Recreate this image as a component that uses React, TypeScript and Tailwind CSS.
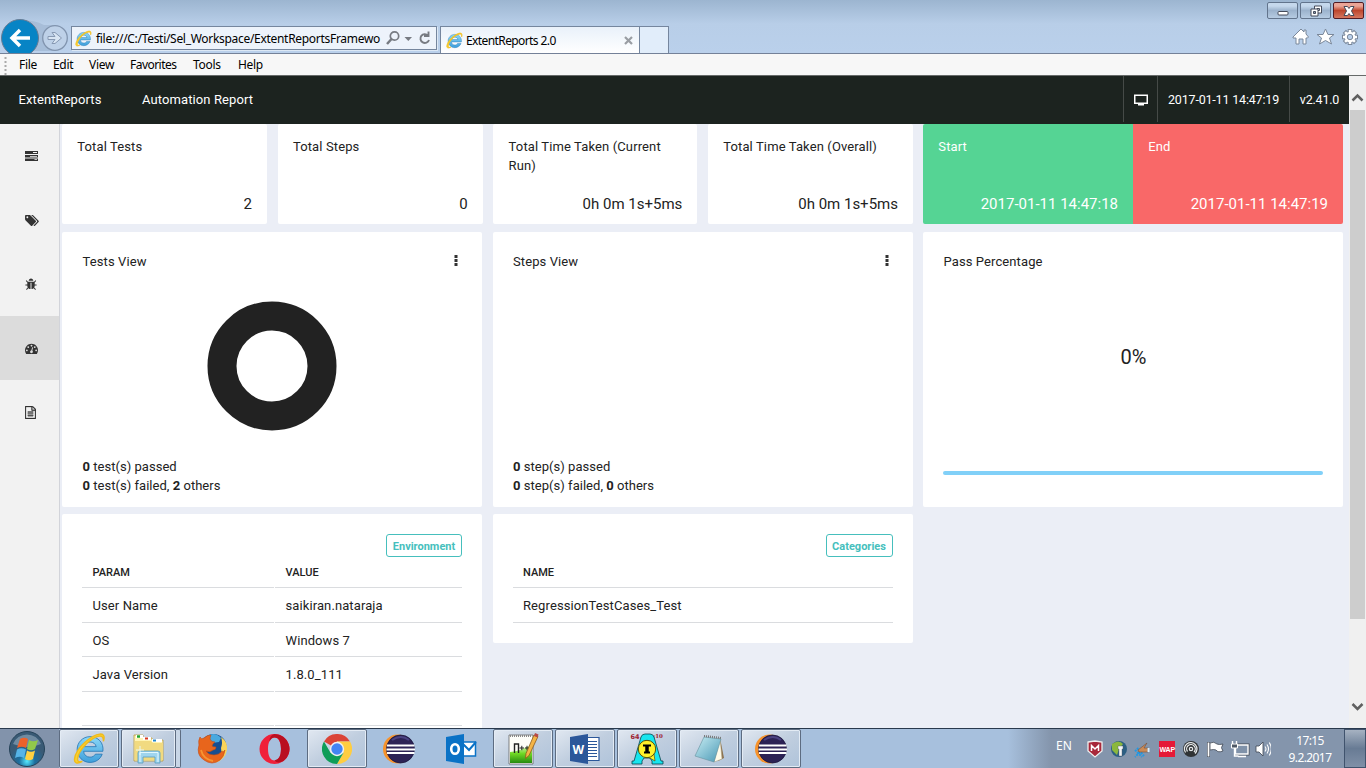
import React from 'react';

const tags = "M448 448q0-53-37.5-90.5t-90.5-37.5-90.5 37.5-37.5 90.5 37.5 90.5 90.5 37.5 90.5-37.5 37.5-90.5zM1515 1024q0 53-37 90l-491 492q-39 37-91 37-53 0-90-37l-715-716q-38-37-64.5-101t-26.5-117v-416q0-52 38-90t90-38h416q53 0 117 26.5t102 64.5l715 714q37 39 37 91zM1899 1024q0 53-37 90l-491 492q-39 37-91 37-36 0-59-14t-53-45l470-470q37-37 37-90 0-52-37-91l-715-714q-38-38-102-64.5t-117-26.5h224q53 0 117 26.5t102 64.5l715 714q37 39 37 91z";
const bug = "M1632 960q0 26-19 45t-45 19h-224q0 171-67 290l208 209q19 19 19 45t-19 45q-18 19-45 19t-45-19l-198-197q-5 5-15 13t-42 28.5-65 36.5-82 29-97 13v-896h-128v896q-51 0-101.5-13.5t-87-33-66-39-43.5-32.5l-15-14-183 207q-20 21-48 21-24 0-43-16-19-18-20.5-44.5t15.5-46.5l202-227q-58-114-58-274h-224q-26 0-45-19t-19-45 19-45 45-19h224v-294l-173-173q-19-19-19-45t19-45 45-19 45 19l173 173h844l173-173q19-19 45-19t45 19 19 45-19 45l-173 173v294h224q26 0 45 19t19 45zM1152 384h-640q0-133 93.5-226.5t226.5-93.5 226.5 93.5 93.5 226.5z";
const dash = "M384 1152q0-53-37.5-90.5t-90.5-37.5-90.5 37.5-37.5 90.5 37.5 90.5 90.5 37.5 90.5-37.5 37.5-90.5zM576 704q0-53-37.5-90.5t-90.5-37.5-90.5 37.5-37.5 90.5 37.5 90.5 90.5 37.5 90.5-37.5 37.5-90.5zM1004 1185l101-382q6-26-7.5-48.5t-38.5-29.5-48 6.5-30 39.5l-101 382q-60 5-107 43.5t-63 98.5q-20 77 20 146t117 89 146-20 89-117q16-60-6-117t-72-91zM1664 1152q0-53-37.5-90.5t-90.5-37.5-90.5 37.5-37.5 90.5 37.5 90.5 90.5 37.5 90.5-37.5 37.5-90.5zM1024 512q0-53-37.5-90.5t-90.5-37.5-90.5 37.5-37.5 90.5 37.5 90.5 90.5 37.5 90.5-37.5 37.5-90.5zM1472 704q0-53-37.5-90.5t-90.5-37.5-90.5 37.5-37.5 90.5 37.5 90.5 90.5 37.5 90.5-37.5 37.5-90.5zM1792 1152q0 261-141 483-19 29-54 29h-1402q-35 0-54-29-141-221-141-483 0-182 71-348t191-286 286-191 348-71 348 71 286 191 191 286 71 348z";
const file = "M1468 380q28 28 48 76t20 88v1152q0 40-28 68t-68 28h-1344q-40 0-68-28t-28-68v-1600q0-40 28-68t68-28h896q40 0 88 20t76 48zM1024 136v376h376q-10-29-22-41l-313-313q-12-12-41-22zM1408 1664v-1024h-416q-40 0-68-28t-28-68v-416h-768v1536h1280zM384 800q0-14 9-23t23-9h704q14 0 23 9t9 23v64q0 14-9 23t-23 9h-704q-14 0-23-9t-9-23v-64zM1120 1024q14 0 23 9t9 23v64q0 14-9 23t-23 9h-704q-14 0-23-9t-9-23v-64q0-14 9-23t23-9h704zM1120 1280q14 0 23 9t9 23v64q0 14-9 23t-23 9h-704q-14 0-23-9t-9-23v-64q0-14 9-23t23-9h704z";

function IeLogo({ size }: { size: number }) {
  return (
    <svg width={size} height={size} viewBox="0 0 32 32" className="shrink-0">
      <defs>
        <linearGradient id="ieBlue" x1="0" y1="0" x2="0" y2="1">
          <stop offset="0" stopColor="#8bd8f7" /><stop offset="1" stopColor="#3f9fdb" />
        </linearGradient>
      </defs>
      <path d="M16.5 4.500C9.500 4.500 4 10 4 17s5.500 12.500 12.500 12.500c5.500 0 10-3 11.800-8h-6.600c-1 1.800-2.800 2.900-5.200 2.900-3.500 0-6-2.300-6.200-5.700H29C30 10.500 24.500 4.500 16.500 4.500zM10.400 14.200c.7-2.700 3-4.500 6.100-4.500s5.400 1.800 6 4.500z" fill="url(#ieBlue)" stroke="#2476b5" strokeWidth=".8" />
      <path d="M29.500 9C31 4.500 30 1.500 26 2 18 3 3 15 1.500 26c-.6 4 2.500 5.500 7.500 2.500-3.500 1-5 0-4.500-3C5.500 17 18 5 25.500 4c3-.4 4 1.500 4 5z" fill="#fbd22f" stroke="#f0bb1c" strokeWidth="1.300" />
    </svg>
  );
}

function Eclipse() {
  return (
    <svg width="34" height="32" viewBox="0 0 34 32">
      <circle cx="15.500" cy="16" r="14.500" fill="#f7932c" />
      <circle cx="18.500" cy="16" r="14" fill="#2c2255" stroke="#17133a" strokeWidth=".7" />
      <path d="M5 12.500h27.500M4.500 16.500h28.500M5 20h27.500" stroke="#fff" strokeWidth="1.800" />
      <path d="M10 7q9-6 17 0" stroke="#4b4282" strokeWidth="2" fill="none" />
    </svg>
  );
}

function Chrome() {
  return (
    <svg width="30" height="30" viewBox="0 0 30 30">
      <path d="M15 15 2 7.500A15 15 0 0 1 28 7.500H15z" fill="#db4437" />
      <path d="M28 7.500A15 15 0 0 1 15 30l6.500-11.200L15 7.500z" fill="#ffcd40" />
      <path d="M15 30A15 15 0 0 1 2 7.500l6.500 11.300L15 22l6.500-3.200z" fill="#0f9d58" />
      <circle cx="15" cy="15" r="7.200" fill="#f1f1f1" /><circle cx="15" cy="15" r="5.700" fill="#4285f4" />
    </svg>
  );
}

function Firefox() {
  return (
    <svg width="31" height="31" viewBox="0 0 31 31">
      <circle cx="16.500" cy="14" r="13" fill="#174e91" />
      <path d="M10 3q8-5 14 2l-2 4-7 1-5-2z" fill="#49a9df" />
      <path d="M24 4q7 5 6 13-2 10-12 13 8-8 6-15 2-5 0-11z" fill="#f9d45a" />
      <path d="M3 4Q1 8 2 12-1 22 7 27q8 6 16 0 4-3 5-10-2 3-3 1-3 4-8 4-6 0-8-4 4 2 7-1 3 0 3-3-3 0-4-1 1-3 3-4-4 0-5-3 0-2 1-4-4 0-7 3Q4 7 3 4z" fill="#e8651c" stroke="#c54a12" strokeWidth=".6" />
      <path d="M4 17q2 9 12 11" stroke="#f69432" strokeWidth="1.800" fill="none" />
    </svg>
  );
}

function Opera() {
  return (
    <svg width="31" height="32" viewBox="0 0 31 32">
      <path fillRule="evenodd" d="M15.500 1a15 15 0 1 0 0 30 15 15 0 0 0 0-30zm0 3.500c4 0 6.500 4.500 6.500 11.500s-2.500 11.500-6.500 11.500S9 23 9 16s2.500-11.500 6.500-11.500z" fill="#f0203a" />
      <path d="M15.500 1a15 15 0 0 1 9 27q-6 3-9-.5 6.500-1 6.500-11.500Q22 4 15.500 4.500q-3 0-5 4Q10 3 15.500 1z" fill="#b90f20" />
    </svg>
  );
}

function Explorer() {
  return (
    <svg width="34" height="32" viewBox="0 0 34 32">
      <path d="M2 4V2h9v3h9v2h11v21H2z" fill="#fff4b4" stroke="#b99a3e" strokeWidth=".8" />
      <path d="M11 4h8v3h-8zM20 6h10v3H20zM4 2h7v3H4z" fill="#fff" />
      <path d="M5 3.500h3" stroke="#24a52c" strokeWidth="2.500" /><path d="M13 5.500h3" stroke="#d63920" strokeWidth="2" /><path d="M21 7.500h3" stroke="#2488cb" strokeWidth="2" />
      <path d="M3 8h16l2 2h10v17H3z" fill="#f1da80" />
      <path d="M6 30V20q0-2 2-2h18q2 0 2 2v10h-5v-6H11v6z" fill="#9fd5ee" stroke="#579dbe" strokeWidth=".8" />
      <path d="M8 19.500h18M8 20v9M26 20v9M8 13v9M4 17h8" stroke="#e9faff" strokeWidth=".9" />
    </svg>
  );
}

function Outlook() {
  return (
    <svg width="32" height="32" viewBox="0 0 32 32">
      <path d="M18 9h12.500v14H18z" fill="#fff" stroke="#0a72c6" strokeWidth="1.500" /><path d="m18 11 6 6 7-8" fill="none" stroke="#0a72c6" strokeWidth="2" />
      <path d="m1 4 18-3v30L1 28z" fill="#0a72c6" /><ellipse cx="10" cy="16" rx="3.800" ry="4.800" fill="none" stroke="#fff" strokeWidth="2.600" />
    </svg>
  );
}

function Notepadpp() {
  return (
    <svg width="33" height="34" viewBox="0 0 33 34">
      <defs><linearGradient id="npp" x1="0" x2="0" y1="0" y2="1"><stop stopColor="#eafbd9" /><stop offset=".5" stopColor="#70d925" /><stop offset="1" stopColor="#268a10" /></linearGradient></defs>
      <path d="M2 3h24v29H2z" fill="#fdfdf8" stroke="#666" strokeWidth=".8" /><path d="M3 20q11-1 22-8v19H3z" fill="url(#npp)" /><path d="M3 4h22" stroke="#888" strokeWidth="2" strokeDasharray="1 1" />
      <path d="M7.500 21V12h4v9" fill="none" stroke="#222" strokeWidth="1.400" /><path d="M12.500 16h4.500m-2.200-2.200v4.400M18 16h4m-2-2.200v4.400" stroke="#222" />
      <path d="m27 3 4 1.500-9 19-3.500 3 .5-5z" fill="#f4b446" stroke="#8c5a1c" strokeWidth=".8" /><path d="m28 1 3.500 1.500-1 3L27 4z" fill="#b84a47" />
    </svg>
  );
}

function Word() {
  return (
    <svg width="32" height="32" viewBox="0 0 32 32">
      <path d="M17 4.500h13v23H17z" fill="#fff" stroke="#2b579a" strokeWidth="1.200" /><path d="M19 8.500h9m-9 3h9m-9 3h9m-9 3h9m-9 3h9m-9 3h9" stroke="#2b579a" />
      <path d="m1 4 18-3v30L1 28z" fill="#2b579a" /><text x="3.500" y="20.500" fontFamily="Open Sans" fontSize="12" fontWeight="bold" fill="#fff">W</text>
    </svg>
  );
}

function AInfo() {
  return (
    <svg width="36" height="36" viewBox="0 0 36 36">
      <text x="1.500" y="7.500" fontFamily="DejaVu Sans" fontSize="6.500" fontWeight="bold" fill="#9c2230">64</text><text x="23" y="7" fontFamily="DejaVu Serif" fontSize="5.500" fontWeight="bold" fill="#9c2230">v10</text>
      <path d="M12 6q1-3 4-3h5q3 0 4 3l7 24h2v3H23v-3l-2-3h-6l-2 3v3H3v-3h2z" fill="#18e5ee" stroke="#09434b" strokeWidth=".8" />
      <path d="m19 26 7 4-1-7z" fill="#fff229" stroke="#554f0a" strokeWidth=".7" /><circle cx="18" cy="18" r="8.700" fill="#fff229" stroke="#554f0a" />
      <path d="M14 14.500h8m-7 7h6" stroke="#000" strokeWidth="2.200" /><path d="M18 14v7" stroke="#000" strokeWidth="3.500" />
    </svg>
  );
}

function Notepad() {
  return (
    <svg width="32" height="32" viewBox="0 0 32 32">
      <defs><linearGradient id="np" x2="1" y2="1"><stop stopColor="#c8edf3" /><stop offset="1" stopColor="#4998b5" /></linearGradient></defs>
      <path d="m27 5 4 20-6 3z" fill="#8c7350" /><path d="m27 5 2 21-8 3z" fill="#fffbe9" stroke="#a69a7d" strokeWidth=".5" /><path d="m11 4 17 2-7 23-19-6z" fill="url(#np)" stroke="#64929f" strokeWidth=".6" />
      <path d="m11 3 17 2" stroke="#777" strokeWidth="2.200" strokeDasharray="1 1" />
    </svg>
  );
}

const tasks = [
  { icon: <IeLogo size={33} />, open: true }, { icon: <Explorer />, open: true, stack: true }, { icon: <Firefox />, open: false }, { icon: <Opera />, open: false },
  { icon: <Chrome />, open: true }, { icon: <Eclipse />, open: false }, { icon: <Outlook />, open: false }, { icon: <Notepadpp />, open: true },
  { icon: <Word />, open: true }, { icon: <AInfo />, open: true }, { icon: <Notepad />, open: true }, { icon: <Eclipse />, open: true },
];

function Browser() {
  return (
    <header className="flex h-[54px] justify-between border-b border-[#748198] bg-linear-to-b from-[#9cb5d0] via-[#b8cee8] via-45% to-[#bad0eb] font-['Noto_Sans',sans-serif]">
      <div className="flex h-[53px] pt-[19px]">
        <svg width="70" height="34" viewBox="0 0 70 34" className="shrink-0">
          <path d="M20 1q15 0 24 5h12v26H20z" fill="#9fb7d2" opacity=".7" />
          <circle cx="20" cy="19" r="18.500" fill="#0784c5" stroke="#687c94" />
          <path d="M30 19H12m8-8-8 8 8 8" stroke="#fff" strokeWidth="3.500" fill="none" />
          <circle cx="55" cy="19" r="12.300" fill="#bed1e8" stroke="#8194ae" strokeWidth="1.300" />
          <path d="M48 17.500h7l-3-4h3l6.500 5.500-6.500 5.500h-3l3-4h-7z" fill="#d8e5f3" stroke="#8799b3" />
        </svg>
        <div className="ml-px mt-[7px] flex h-6 w-[366px] items-center border border-[#75869e] bg-[#edf3fb] pl-[3px] shadow-[1px_1px_#dce8f5]">
          <IeLogo size={17} />
          <span className="ml-1 w-[286px] shrink-0 pt-px text-[12px] leading-5 tracking-[-0.300px] whitespace-nowrap text-black">file:///C:/Testi/Sel_Workspace/ExtentReportsFramewo</span>
          <svg width="50" height="18" viewBox="0 0 50 18" className="ml-1 shrink-0" fill="none" stroke="#777b82">
            <circle cx="8.500" cy="7" r="4.200" strokeWidth="1.700" /><path d="m5.500 10-4.500 5" strokeWidth="2.500" /><path d="M18.500 8h7.500l-3.700 4z" fill="#777b82" stroke="none" /><path d="M42 6.500A4.400 4.400 0 1 0 43 11M42.500 2.500v4.500H38" strokeWidth="1.900" />
          </svg>
        </div>
        <div className="ml-[3px] mt-[7px] flex h-[27px] w-[200px] items-center border border-b-0 border-[#75869e] bg-linear-to-b from-[#e9f1fa] to-white pl-[5px]">
          <IeLogo size={17} /><span className="ml-[3px] pt-px text-[12px] leading-5 tracking-[-0.600px] text-black">ExtentReports 2.0</span>
          <svg width="9" height="9" viewBox="0 0 9 9" className="mr-[6px] ml-auto"><path d="m1 1 7 7m0-7L1 8" stroke="#999da3" strokeWidth="2.200" /></svg>
        </div>
        <div className="mt-[7px] h-[27px] w-[29px] border border-b-0 border-l-0 border-[#75869e] bg-[#e1edfa]" />
      </div>
      <div className="flex w-[101px] flex-col">
        <div className="flex gap-[2px] pt-[2px] pl-[2px]">
          {[0, 1, 2].map((i) => (
            <div key={i} className={i === 2 ? 'flex h-[17px] w-[31px] items-center justify-center rounded-[2px] border border-[#521c24] bg-linear-to-b from-[#eaa597] from-20% via-[#bd462d] via-50% to-[#d47760]' : 'flex h-[17px] w-[31px] items-center justify-center rounded-[2px] border border-[#62748c] bg-linear-to-b from-[#c5d8ec] from-20% via-[#9cb3cd] via-50% to-[#b6cbe2]'}>
              <svg width="14" height="12" viewBox="0 0 14 12" fill="#fff" stroke="#454b5a">
                {i === 0 && <rect x="2" y="6.500" width="10" height="3.500" rx="1" />}
                {i === 1 && <><path d="M5.500 1h7v7h-7zM8 3.500h2.500v2H8z" /><path d="M2 4h7v7H2z" /><path d="M4.500 6.500h2v2h-2z" fill="#8c9eb5" /></>}
                {i === 2 && <path d="M2 1.500h3.500L7 3.500l1.500-2H12L9.500 6l2.500 4.500H8.500L7 8.500l-1.500 2H2L4.500 6z" />}
              </svg>
            </div>
          ))}
        </div>
        <svg width="70" height="20" viewBox="0 0 70 20" className="mt-2 ml-[27px]" fill="#fff" stroke="#7b889a">
          <path d="m1 10 8-8 3 3V3h2v4l2.500 3-1 1H14v6h-3v-5H7v5H4v-6H1z" />
          <path d="m33.500 2 2.500 5.500h6L37.500 11l2 6-6-3.500-6 3.500 2-6L25 7.500h6z" />
          <g transform="translate(58 10)">{[0, 45, 90, 135, 180, 225, 270, 315].map((r) => <rect key={r} x="-1.800" y="-7.500" width="3.600" height="5" transform={`rotate(${r})`} />)}<circle r="5.300" stroke="none" /><circle r="2.700" fill="#bad0eb" /></g>
        </svg>
      </div>
    </header>
  );
}

function Stat({ title, value, tone }: { title: string; value: string; tone: string }) {
  return (
    <section className={`flex h-[100px] flex-col justify-between pr-[15px] pt-[13px] pb-[9px] pl-[15.300px] ${tone}`}>
      <h2 className="text-[13px] leading-[19px] tracking-[0.120px]">{title}</h2>
      <div className="text-right text-[15px] leading-[22px] tracking-normal">{value}</div>
    </section>
  );
}

const Dots = () => <svg width="4" height="12" viewBox="0 0 4 12" fill="#333" className="mb-px"><path d="M.5 0h3v3h-3zM.5 4h3v3h-3zM.5 8h3v3h-3z" /></svg>;

function ViewCard({ title, noun, others, chart }: { title: string; noun: string; others: string; chart: boolean }) {
  return (
    <section className="flex h-[275px] flex-col rounded-[2px] bg-white pt-5 pr-5 pl-[20.500px]">
      <div className="flex items-center justify-between pr-1"><h2 className="leading-[19px] tracking-[0.100px]">{title}</h2><Dots /></div>
      <div className="flex h-[186px] items-center justify-center pt-[4px]">
        {chart && <svg width="130" height="130" viewBox="0 0 130 130"><circle cx="65" cy="65" r="50" fill="none" stroke="#222" strokeWidth="29" /></svg>}
      </div>
      <p className="leading-[19px] tracking-[0.030px]"><b className="font-bold">0</b> {noun}(s) passed<br /><b>0</b> {noun}(s) failed, <b>{others}</b> others</p>
    </section>
  );
}

const params = [['User Name', 'saikiran.nataraja', 'h-[35px]'], ['OS', 'Windows 7', 'h-[34px]'], ['Java Version', '1.8.0_111', 'h-[35px]'], ['', '', 'h-[34px]']];

function Dashboard() {
  return (
    <main className="flex h-[604px] w-[1289px] flex-col gap-2 overflow-hidden bg-[#ebeef6] pl-[2px] text-[13px] tracking-[0.100px] text-[#222]">
      <div className="flex shrink-0">
        <div className="flex w-[851px] justify-between">
          <div className="w-[205px]"><Stat title="Total Tests" value="2" tone="rounded-[2px] bg-white" /></div>
          <div className="w-[205px]"><Stat title="Total Steps" value="0" tone="rounded-[2px] bg-white" /></div>
          <div className="w-[204px]"><Stat title="Total Time Taken (Current Run)" value="0h 0m 1s+5ms" tone="rounded-[2px] bg-white" /></div>
          <div className="w-[205px]"><Stat title="Total Time Taken (Overall)" value="0h 0m 1s+5ms" tone="rounded-[2px] bg-white" /></div>
        </div>
        <div className="ml-[10px] grid w-[420px] grid-cols-2">
          <Stat title="Start" value="2017-01-11 14:47:18" tone="rounded-l-[2px] bg-[#55d494] text-white" />
          <Stat title="End" value="2017-01-11 14:47:19" tone="rounded-r-[2px] bg-[#f96868] text-white" />
        </div>
      </div>
      <div className="grid shrink-0 grid-cols-[420px_420px_420px] gap-x-[10.500px]">
        <ViewCard title="Tests View" noun="test" others="2" chart />
        <ViewCard title="Steps View" noun="step" others="0" chart={false} />
        <section className="flex h-[275px] flex-col rounded-[2px] bg-white pt-5 pr-5 pl-5">
          <h2 className="pl-[0.500px] leading-[19px]">Pass Percentage</h2>
          <div className="mt-[71px] pl-px text-center text-[20px] leading-[30px] tracking-normal">0%</div>
          <div className="mt-[99px] h-1 rounded-full bg-[#81d0f8]" />
        </section>
      </div>
      <div className="-mt-px grid shrink-0 grid-cols-[420px_420px] items-start gap-x-[10.500px]">
        <section className="flex h-[240px] flex-col rounded-t-[2px] bg-white px-5 pt-5">
          <span className="flex h-[23px] w-[76px] items-center justify-center self-end rounded-[3px] border border-[#46bfbd] pt-[3px] text-[11px] font-bold tracking-normal text-[#46bfbd]">Environment</span>
          <div className="grid h-[31px] grid-cols-[192px_187px] gap-x-px text-[11px] font-medium tracking-normal"><span className="border-b border-[#dadcdf] pt-2 pl-[10.500px]">PARAM</span><span className="border-b border-[#dadcdf] pt-2 pl-[10.500px]">VALUE</span></div>
          {params.map(([a, b, h], i) => (
            <div key={i} className={`grid grid-cols-[192px_187px] gap-x-px leading-[36px] ${h}`}>
              <span className="h-full overflow-hidden border-b border-[#dadcdf] pl-[10.500px]">{a}</span><span className="h-full overflow-hidden border-b border-[#dadcdf] pl-[10.500px]">{b}</span>
            </div>
          ))}
        </section>
        <section className="flex h-[129px] flex-col rounded-[2px] bg-white pt-5 pr-5 pl-[20.500px]">
          <span className="flex h-[23px] w-[67px] items-center justify-center self-end rounded-[3px] border border-[#46bfbd] pt-[3px] text-[11px] font-bold tracking-normal text-[#46bfbd]">Categories</span>
          <div className="h-[31px] border-b border-[#dadcdf] pt-2 pl-[10px] text-[11px] font-medium tracking-normal">NAME</div>
          <div className="h-[35px] border-b border-[#dadcdf] pl-[10px] leading-[36px]">RegressionTestCases_Test</div>
        </section>
      </div>
    </main>
  );
}

function Tray() {
  return (
    <div className="flex h-[39px] w-[358px] bg-linear-to-r from-[#a7c0dd] to-[#8495ac] to-12% text-white">
      <span className="mt-[7px] ml-[48px] w-[31px] text-[12px] leading-5">EN</span>
      <svg width="184" height="18" viewBox="0 0 184 18" className="mt-[11px] shrink-0">
        <path d="m1 2 7-1 7 1v9l-7 6-7-6z" fill="#a8283a" stroke="#eee" strokeWidth="1.300" /><path d="M4.500 11V5.500L8 9l3.500-3.500V11" fill="none" stroke="#fff" strokeWidth="1.500" />
        <circle cx="32" cy="9" r="8" fill="#2c5f83" /><path d="M25 4q7-5 11 0l-4 5-2 6-5-5z" fill="#8bb73d" /><path d="M31 6h5v3h-1v7h-3V9h-1z" fill="#f2f5f7" stroke="#556" strokeWidth=".4" />
        <path d="m48 10 7 7m0-7-7 7m2-9 7 8" stroke="#2498e1" strokeWidth="2" strokeDasharray="2 1" /><path d="m51 10 9-7-3 5h4v4h-9z" fill="#c98a57" stroke="#6e452c" strokeWidth=".5" /><path d="M60.500 8h2v4h-2z" fill="#d6efff" />
        <rect x="72" y="1" width="16" height="16" fill="#e51937" /><text x="72.500" y="11.500" fontFamily="Liberation Sans" fontSize="7" fontWeight="bold" fill="#fff" letterSpacing="-.2">WAP</text>
        <circle cx="104" cy="9" r="8" fill="#303335" /><path d="M98.500 12.500a6.300 6.300 0 1 1 9.500 1m-7.500-2a4.300 4.300 0 1 1 6.500.5" fill="none" stroke="#e6e9eb" strokeWidth="1.300" /><circle cx="104" cy="9" r="1.700" fill="none" stroke="#e6e9eb" strokeWidth="1.200" />
        <path d="M123 3q4-2 7 1 2 1 6 0-3 4 0 7-5 2-7-1-2-1-6 0z" fill="#fff" stroke="#434a55" strokeWidth=".8" /><path d="M121.500 2v15" stroke="#434a55" strokeWidth="3" /><path d="M121.500 2.500v14" stroke="#fff" strokeWidth="1.800" />
        <path d="M148.500 5H161v9h-12.500z" fill="#8092a9" stroke="#434a55" strokeWidth="3" /><path d="M148.500 5H161v9h-12.500z" fill="#8092a9" stroke="#fff" strokeWidth="1.400" /><path d="M151 16.500h8M147.500 8v8h4m-6-15v3m4-3v3" fill="none" stroke="#fff" strokeWidth="1.400" /><path d="M144.500 4h6v4h-6z" fill="#4f5966" stroke="#fff" />
        <path d="M169 6h3l4-4v14l-4-4h-3z" fill="#fff" stroke="#3c4552" strokeWidth=".8" /><path d="M178 6.500q2 2.500 0 5m2-7q3 4.500 0 9m2.300-11q4 6.500 0 13" fill="none" stroke="#fff" strokeWidth="1.100" />
      </svg>
      <div className="mt-[3px] ml-[5px] w-[68px] shrink-0 text-center text-[12px] leading-[17px] tracking-[-0.600px]">17:15<br />9.2.2017</div>
      <div className="ml-auto h-[39px] w-[22px] shrink-0 border border-[#40536d] bg-linear-to-b from-[#a6b2c2] via-[#687b94] via-50% to-[#8090a7]" />
    </div>
  );
}

export default function App() {
  return (
    <div className="flex h-[768px] w-[1366px] flex-col overflow-hidden bg-white font-[Roboto,sans-serif]">
      <Browser />
      <nav className="flex h-[22px] items-center border-b border-[#666a69] bg-[#f7f7f7] font-['Noto_Sans',sans-serif] text-[12px] leading-5 tracking-[-0.300px] text-black">
        <svg width="19" height="20" viewBox="0 0 19 20"><path d="M5.500 2v18" stroke="#aaa" strokeWidth="2" strokeDasharray="2 2" /></svg>
        <span className="w-[34px]">File</span><span className="w-9">Edit</span><span className="w-[41px]">View</span><span className="w-[63px] tracking-[-0.540px]">Favorites</span><span className="w-[45px]">Tools</span><span>Help</span>
      </nav>
      <div className="flex h-[652px] shrink-0">
        <div className="flex w-[1349px] flex-col">
          <header className="flex h-12 items-center bg-[#1c231f] pl-[18.500px] text-[13px] text-white">
            <span className="w-[123.500px] tracking-[0.100px]">ExtentReports</span><span className="tracking-[0.100px]">Automation Report</span>
            <div className="ml-auto flex h-full items-start">
              <div className="flex h-[46px] w-[34px] items-center justify-center border-l border-[#454a47] pt-[2px]"><svg width="14" height="12" viewBox="0 0 14 12"><path d="M.75 1.250h12.500v8H.75z" fill="none" stroke="#fff" strokeWidth="1.500" /><path d="M5 9h4v1h1v1.500H4V10h1z" fill="#fff" /></svg></div>
              <div className="flex h-[46px] w-[132px] items-center justify-center border-l border-[#454a47] pt-[2px] text-[12.500px] tracking-[-0.180px]">2017-01-11 14:47:19</div>
              <div className="flex h-[46px] w-[60px] items-center justify-center border-l border-[#454a47] pt-[2px] text-[12.500px] tracking-[-0.200px]">v2.41.0</div>
            </div>
          </header>
          <div className="flex h-[604px]">
            <aside className="flex w-[60px] shrink-0 flex-col border-r border-[#d2d4da] bg-[#f2f2f2]">
              <div className="flex h-16 items-center pl-[25px]"><svg width="13" height="10" viewBox="0 0 13 10"><path fillRule="evenodd" fill="#333" d="M0 0h13v3H0zM0 4h13v2.500H0zM0 7.500h13V10H0zM8 1h4v1H8zM5 5h7v.8H5zM9.500 8.300H12V9H9.500z" /></svg></div>
              <div className="flex h-16 items-center pl-[25px]"><svg width="14" height="13" viewBox="0 0 1920 1792" fill="#333"><path d={tags} /></svg></div>
              <div className="flex h-16 items-center pl-[25px]"><svg width="12" height="13" viewBox="0 0 1664 1792" fill="#333"><path d={bug} /></svg></div>
              <div className="flex h-16 items-center bg-[#dcdcdc] pl-[25px]"><svg width="13" height="13" viewBox="0 0 1792 1792" fill="#333"><path d={dash} /></svg></div>
              <div className="flex h-16 items-center pl-[25px]"><svg width="11" height="13" viewBox="0 0 1536 1792" fill="#333"><path d={file} stroke="#333" strokeWidth="40" /></svg></div>
            </aside>
            <Dashboard />
          </div>
        </div>
        <div className="flex w-[17px] flex-col items-center bg-[#f0f0f0]">
          <svg width="17" height="34" viewBox="0 0 17 34"><path d="m3.500 24.500 5-5 5 5" fill="none" stroke="#606060" strokeWidth="2.500" /></svg>
          <div className="h-[509px] w-[15px] bg-[#cdcdcd]" />
          <svg width="17" height="30" viewBox="0 0 17 30" className="mt-[73px]"><path d="m3.500 12 5 5 5-5" fill="none" stroke="#606060" strokeWidth="2.500" /></svg>
        </div>
      </div>
      <footer className="flex h-10 shrink-0 border-t border-[#29394d] bg-[#a7c0dd] font-['Noto_Sans',sans-serif]">
        <div className="flex w-[59px] items-center justify-center bg-[#8293ab] pr-[5px]">
          <svg width="38" height="38" viewBox="0 0 38 38">
            <defs><radialGradient id="orb" cx=".5" cy=".85"><stop stopColor="#55e9ff" /><stop offset=".45" stopColor="#1c6e9e" /><stop offset="1" stopColor="#395a75" /></radialGradient></defs>
            <circle cx="19" cy="19" r="17.500" fill="url(#orb)" stroke="#254258" /><path d="M5 14a15 15 0 0 1 28 0q-13 6-28 0" fill="#9eb4c5" opacity=".55" />
            <path d="M12 9q4-2.500 8 0l-2 9q-4-2.500-9 0z" fill="#ed622b" /><path d="M21 10q4 2.500 9 0l-3 9q-4 2.500-8 0z" fill="#91c94a" /><path d="M9 19.500q4-2.500 9 0l-2 8.500q-4-2.500-9 0z" fill="#56b4e7" /><path d="M19 20.500q4 2.500 8 0L25 29q-4 2.500-8 0z" fill="#ffd140" />
          </svg>
        </div>
        {tasks.map((t, i) => (
          <div key={i} className="flex h-[39px] w-[62px] shrink-0">
            <div className={t.open ? (t.stack ? 'flex h-full w-[55px] items-center justify-center rounded-[2px] border border-[#5d6c81] bg-linear-to-br from-[#e1e8f1] via-[#c0cedf] to-[#afc3da] shadow-[inset_0_0_0_1px_#e3ebf4]' : 'flex h-full w-[60px] items-center justify-center rounded-[2px] border border-[#5d6c81] bg-linear-to-br from-[#e1e8f1] via-[#c0cedf] to-[#afc3da] shadow-[inset_0_0_0_1px_#e3ebf4]') : 'flex h-full w-[59px] items-center justify-center'}>{t.icon}</div>
            {t.stack && <div className="h-full w-[5px] rounded-r-[2px] border border-l-0 border-[#5d6c81] bg-[#c8d6e6]" />}
          </div>
        ))}
        <div className="ml-auto"><Tray /></div>
      </footer>
    </div>
  );
}
